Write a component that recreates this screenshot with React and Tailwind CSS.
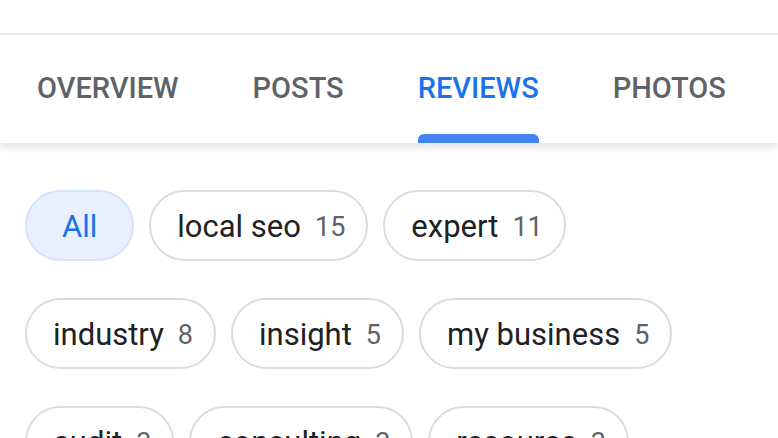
import React from 'react';

const tabs = ['Overview', 'Posts', 'Reviews', 'Photos'];

const topics = [
  [
    { label: 'All', active: true },
    { label: 'local seo', count: 15 },
    { label: 'expert', count: 11 },
  ],
  [
    { label: 'industry', count: 8 },
    { label: 'insight', count: 5 },
    { label: 'my business', count: 5 },
  ],
  [
    { label: 'audit', count: 3 },
    { label: 'consulting', count: 3 },
    { label: 'resource', count: 3 },
  ],
];

const Chip = ({ label, count, active }) => {
  if (active) {
    return (
      <button className="h-[71px] px-[35px] pt-[2px] rounded-full border-2 border-[#d2e3fc] bg-[#e8f0fe] text-[#1a73e8] text-[31px] leading-[36px]">
        {label}
      </button>
    );
  }
  return (
    <button className="h-[71px] pl-[26px] pr-[21px] pt-[3px] rounded-full border-2 border-[#dadce0] bg-white flex items-center gap-[14px] shrink-0">
      <span className="text-[31px] leading-[36px] text-[#202124]">{label}</span>
      <span className="text-[27px] leading-[36px] text-[#5f6368]">{count}</span>
    </button>
  );
};

const App = () => {
  return (
    <div className="w-[778px] h-[438px] overflow-hidden bg-white" style={{ fontFamily: 'Roboto, "Liberation Sans", sans-serif' }}>
      <div className="h-[35px] overflow-hidden border-b-2 border-[#ececec]" />

      <div className="relative z-10 bg-white shadow-[0_4px_8px_rgba(0,0,0,0.12)]">
        <div className="flex h-[108px]">
          {tabs.map((t) => {
            const active = t === 'Reviews';
            return (
              <div key={t} className="px-[37px] flex flex-col">
                <div className="flex-1 flex items-center pt-[8px]">
                  <span
                    className={`uppercase font-medium text-[29px] ${active ? 'text-[#1a73e8]' : 'text-[#5f6368]'}`}
                  >
                    {t}
                  </span>
                </div>
                <div className={`h-[9px] rounded-t-[6px] ${active ? 'bg-[#4285f4]' : 'bg-transparent'}`} />
              </div>
            );
          })}
        </div>
      </div>

      <div className="pt-[47px] pl-[25px] flex flex-col gap-[37px]">
        {topics.map((row, i) => (
          <div key={i} className="flex gap-[15px]">
            {row.map((c) => (
              <Chip key={c.label} {...c} />
            ))}
          </div>
        ))}
      </div>
    </div>
  );
};

export default App;
